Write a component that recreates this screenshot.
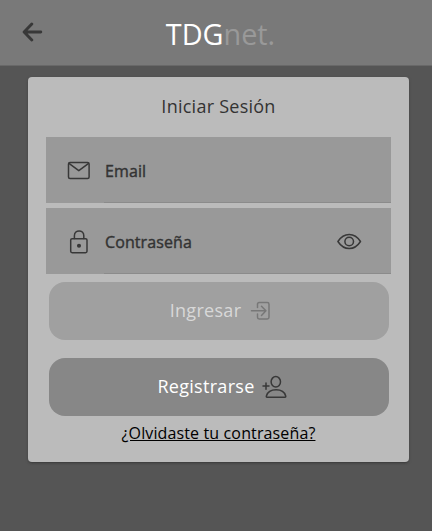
<div class="page">
  <header>
    <button class="back" aria-label="Volver">
      <svg width="22" height="20" viewBox="0 0 22 20"><path d="M9.8 2 2.1 10l7.7 8M3 10h15.8" stroke-width="2.9" /></svg>
    </button>
    <h1>TDG<span>net.</span></h1>
  </header>
  <main>
    <section class="card">
      <h2>Iniciar Sesión</h2>
      <div class="field">
        <svg class="lead" width="24" height="20" viewBox="0 0 24 20"><rect x="1.5" y="1.4" width="20.6" height="16" rx="1.5" /><path d="m2.3 2.7 9.5 7 9.5-7" /></svg>
        <span class="slot">Email</span>
      </div>
      <div class="field second">
        <svg class="lead" width="24" height="26" viewBox="0 0 24 26"><rect x="3.7" y="9.7" width="16.3" height="14" rx="1.4" /><path d="M7.4 9.5V6.7c0-6.3 9.4-6.3 9.4 0v2.8" /><circle class="dot" cx="12" cy="16.8" r="1.3" /></svg>
        <span class="slot">Contraseña</span>
        <svg class="eye" width="26" height="18" viewBox="0 0 26 18"><path d="M1.9 8.5c2.8-4.3 6.5-7 11.3-7s8.5 2.7 11.3 7c-2.8 4.3-6.5 7-11.3 7s-8.5-2.7-11.3-7Z" /><circle cx="13.2" cy="8.5" r="4.3" /></svg>
      </div>
      <button class="action disabled">
        <span>Ingresar</span>
        <svg width="22" height="20" viewBox="0 0 22 20"><path d="M7.5 6.5V3.2q0-1.7 1.7-1.7h8.1q1.7 0 1.7 1.7v13.1q0 1.7-1.7 1.7H9.2q-1.7 0-1.7-1.7V13M1.5 9.8h13.6M11.5 5.2l4.4 4.6-4.4 4.6" /></svg>
      </button>
      <button class="action register">
        <span>Registrarse</span>
        <svg width="26" height="24" viewBox="0 0 26 24"><ellipse cx="13.8" cy="6.8" rx="4.7" ry="5.2" /><path d="M5 22.2c-.6 0-.8-.5-.6-1.2 2.3-8.2 17.1-8.2 19.3 0 .2.7 0 1.2-.7 1.2ZM1 11.1h6M4 8v6.2" /></svg>
      </button>
      <a href="#recuperar">¿Olvidaste tu contraseña?</a>
    </section>
  </main>
</div>

<style>
  :global(body) {
    margin: 0;
  }
  .page {
    height: 531px;
    box-sizing: border-box;
    display: flex;
    flex-direction: column;
    background: #555;
    font-family: "Open Sans", sans-serif;
    overflow: hidden;
  }
  header {
    height: 66px;
    box-sizing: border-box;
    border-bottom: 1px solid #686868;
    background: #797979;
    display: grid;
    grid-template-columns: 60px 1fr 60px;
    align-items: center;
    flex: none;
  }
  svg {
    display: block;
    fill: none;
    stroke: #383838;
    stroke-width: 1.5;
    stroke-linecap: round;
    stroke-linejoin: round;
    flex: none;
  }
  .dot {
    fill: #383838;
  }
  .back {
    border: 0;
    background: none;
    padding: 0 0 2px 22px;
  }
  h1 {
    margin: 3px 0 0 9px;
    font-size: 28.8px;
    line-height: 40px;
    font-weight: 400;
    text-align: center;
    color: #fff;
  }
  h1 span {
    color: #999;
  }
  main {
    padding: 11px 23px 0 28px;
  }
  .card {
    height: 385px;
    box-sizing: border-box;
    padding: 16px 18px 0;
    border-radius: 4px;
    background: #bbb;
    box-shadow: 0 2px 2px -1px #3339, 0 1px 3px #3336;
    display: flex;
    flex-direction: column;
  }
  h2 {
    margin: 0 0 18px;
    font-size: 18px;
    line-height: 26px;
    font-weight: 400;
    letter-spacing: 0.25px;
    text-align: center;
    color: #333;
  }
  .field {
    height: 66px;
    box-sizing: border-box;
    margin: 0 0 5px;
    padding: 1px 29px 0 21px;
    display: flex;
    align-items: center;
    background: linear-gradient(#8b8b8b, #8b8b8b) 58px 100% / 100% 1px no-repeat #999;
  }
  .slot {
    flex: 1;
    margin-left: 14px;
    font-size: 16px;
    line-height: 24px;
    letter-spacing: 0.1px;
    -webkit-text-stroke: 0.4px #333;
    color: #333;
  }
  .action {
    height: 58px;
    margin: 8px 2px 0 3px;
    padding: 0 0 2px;
    border: 0;
    border-radius: 16px;
    font: 500 18px/26px "Open Sans", sans-serif;
    letter-spacing: 0.3px;
    color: #fff;
    background: #878787;
    display: flex;
    justify-content: center;
    align-items: center;
    flex: none;
  }
  .disabled {
    margin-top: 3px;
    padding-left: 4px;
    background: #a0a0a0;
    color: #d8d8d8;
    gap: 9px;
  }
  .disabled svg {
    margin-top: 2px;
    stroke: #777;
  }
  .register {
    margin-top: 18px;
    padding-left: 7px;
    gap: 7px;
  }
  .register svg {
    margin-top: 2px;
  }
  a {
    margin-top: 5px;
    font-size: 16px;
    line-height: 24px;
    letter-spacing: 0.13px;
    text-align: center;
    color: #000;
  }
</style>
